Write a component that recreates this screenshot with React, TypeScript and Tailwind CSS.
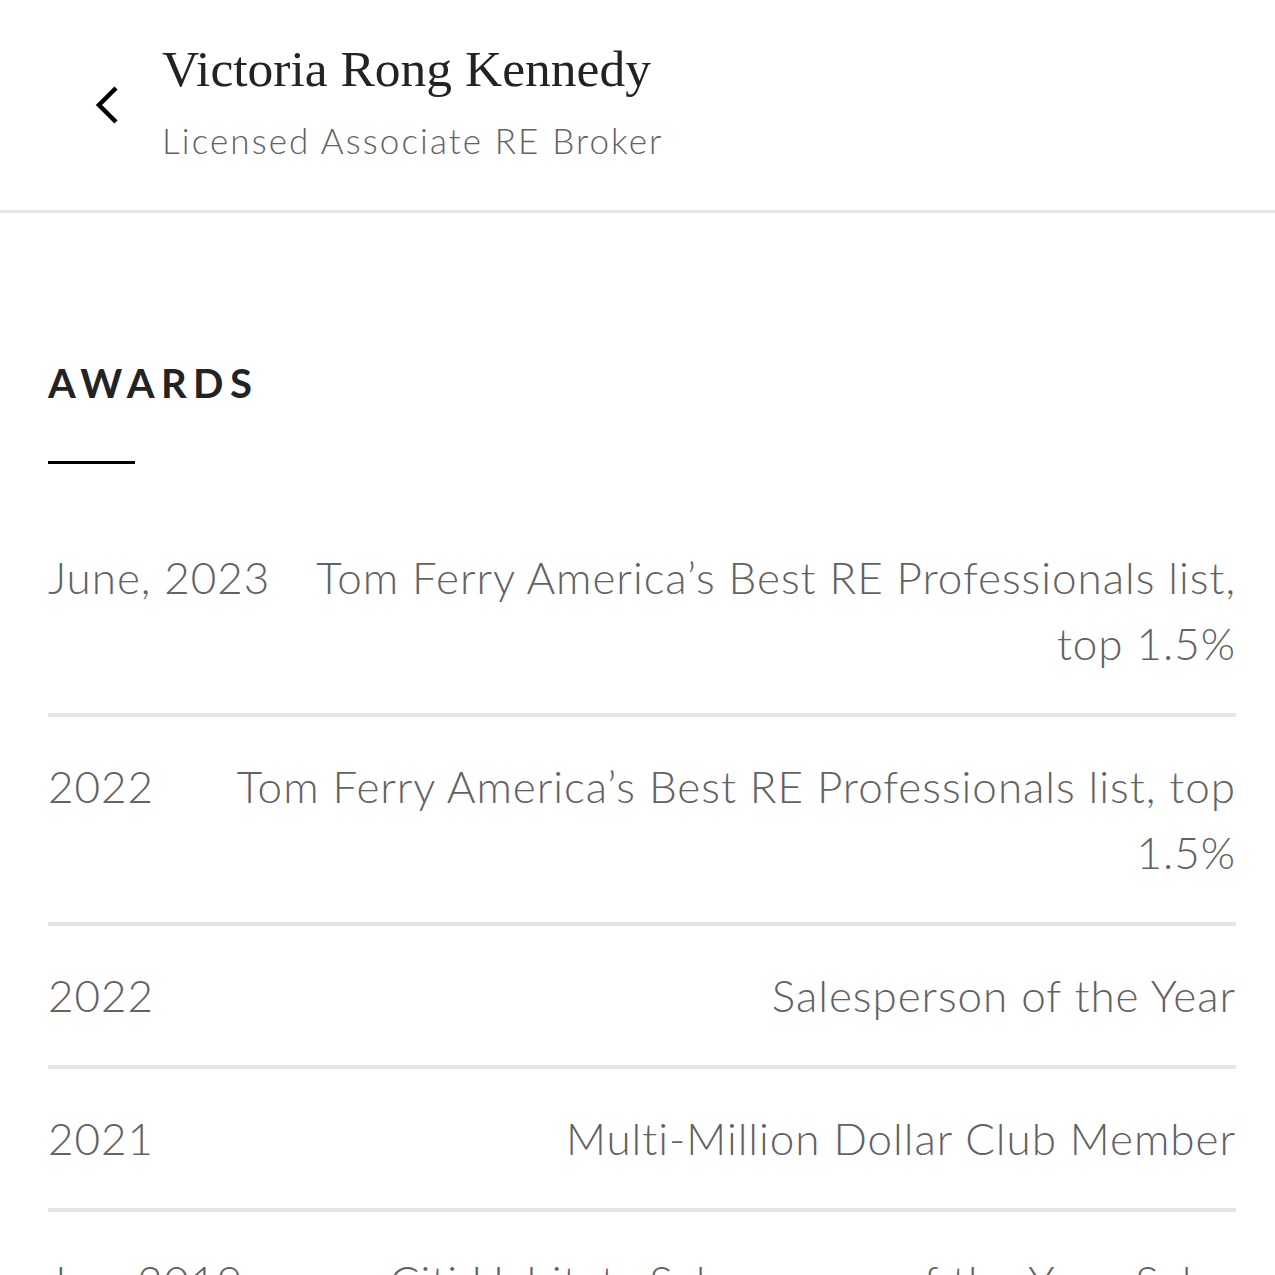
import { ReactNode } from 'react'

const awards = [
  { date: 'June, 2023', title: 'Tom Ferry America’s Best RE Professionals list, top 1.5%' },
  { date: '2022', title: 'Tom Ferry America’s Best RE Professionals list, top 1.5%' },
  { date: '2022', title: 'Salesperson of the Year' },
  { date: '2021', title: 'Multi-Million Dollar Club Member' },
  { date: 'Jan, 2019', title: 'Citi Habitats Salesperson of the Year, Sales Volume' },
]

function BackChevron() {
  return (
    <svg width="28" height="40" viewBox="0 0 28 40" fill="none" className="shrink-0">
      <polyline
        points="22,3 5,20 22,37"
        stroke="#000"
        strokeWidth="4.5"
        strokeLinecap="butt"
        strokeLinejoin="miter"
      />
    </svg>
  )
}

function AwardRow({ date, children }: { date: string; children: ReactNode }) {
  return (
    <div className="flex items-start gap-[40px] border-b-4 border-[#e5e5e5] pt-[36px] pb-[37px]">
      <span className="shrink-0 whitespace-nowrap">{date}</span>
      <span className="flex-1 text-right">{children}</span>
    </div>
  )
}

export default function App() {
  return (
    <div className="min-h-screen bg-white font-['Lato','Noto_Sans',sans-serif] antialiased">
      {/* Header */}
      <header className="flex h-[213px] items-start gap-[40px] border-b-[3px] border-[#e6e6e6] pl-[94px] pt-[39px]">
        <div className="mt-[46px]">
          <BackChevron />
        </div>
        <div className="flex flex-col">
          <h1 className="font-['Liberation_Serif',serif] text-[51.5px] leading-[60px] text-[#222325]">
            Victoria Rong Kennedy
          </h1>
          <p className="mt-[21px] text-[35px] font-light leading-[40px] tracking-[0.06em] text-[#626262]">
            Licensed Associate RE Broker
          </p>
        </div>
      </header>

      {/* Awards */}
      <section className="pl-[48px] pr-[39px] pt-[146px]">
        <h2 className="text-[40px] font-bold leading-[48px] tracking-[0.16em] text-[#222325]">AWARDS</h2>
        <div className="mt-[54px] h-[3px] w-[87px] bg-black" />

        <div className="mt-[44px] text-[44px] font-light leading-[66px] tracking-[0.022em] text-[#626262]">
          {awards.map((a, i) => (
            <AwardRow key={i} date={a.date}>
              {a.title}
            </AwardRow>
          ))}
        </div>
      </section>
    </div>
  )
}
